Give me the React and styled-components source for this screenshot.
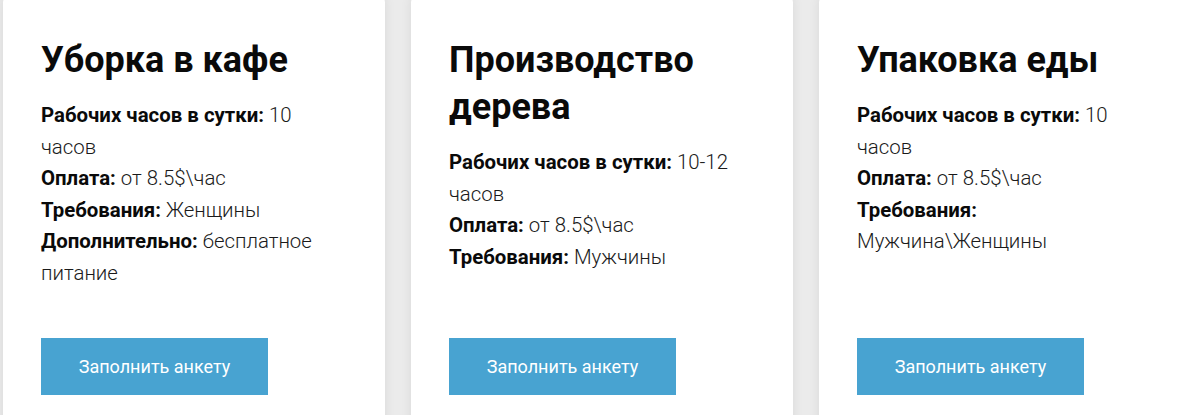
import React from "react";
import styled, { createGlobalStyle } from "styled-components";

const Global = createGlobalStyle`
  html, body {
    margin: 0;
    padding: 0;
    background: #ebebeb;
    overflow: hidden;
  }
  body {
    font-family: Roboto, "Noto Sans", Arial, sans-serif;
    color: #111;
  }
`;

const Row = styled.div`
  display: flex;
  gap: 26px;
  padding-left: 3px;
  margin-top: -7px;
`;

const Card = styled.section`
  flex: 0 0 382px;
  box-sizing: border-box;
  height: 442px;
  background: #fff;
  border-radius: 10px;
  box-shadow: 0 0 12px rgba(0, 0, 0, 0.08);
  padding: 44px 50px 40px 38px;
  display: flex;
  flex-direction: column;
`;

const Title = styled.h2`
  margin: 0 0 16px;
  font-size: 36px;
  line-height: 47px;
  font-weight: 700;
  color: #0a0a0a;
`;

const Info = styled.div`
  font-size: 20.4px;
  line-height: 31.5px;
`;

const Line = styled.p`
  margin: 0;
  font-weight: 300;
  color: #1a1a1a;
`;

const Label = styled.b`
  font-weight: 700;
  color: #0a0a0a;
`;

const Button = styled.button`
  margin-top: auto;
  width: 227px;
  height: 57px;
  border: 0;
  background: #48a3d1;
  color: #fff;
  font-family: Roboto, Arial, sans-serif;
  font-size: 18px;
  font-weight: 400;
  cursor: pointer;
  padding: 0;
`;

const jobs = [
  {
    title: "Уборка в кафе",
    rows: [
      ["Рабочих часов в сутки:", "10 часов"],
      ["Оплата:", "от 8.5$\\час"],
      ["Требования:", "Женщины"],
      ["Дополнительно:", "бесплатное питание"],
    ],
  },
  {
    title: "Производство дерева",
    rows: [
      ["Рабочих часов в сутки:", "10-12 часов"],
      ["Оплата:", "от 8.5$\\час"],
      ["Требования:", "Мужчины"],
    ],
  },
  {
    title: "Упаковка еды",
    rows: [
      ["Рабочих часов в сутки:", "10 часов"],
      ["Оплата:", "от 8.5$\\час"],
      ["Требования:", "Мужчина\\Женщины"],
    ],
  },
];

export default function App() {
  return (
    <>
      <Global />
      <Row>
        {jobs.map((job) => (
          <Card key={job.title}>
            <Title>{job.title}</Title>
            <Info>
              {job.rows.map(([label, value]) => (
                <Line key={label}>
                  <Label>{label}</Label> {value}
                </Line>
              ))}
            </Info>
            <Button>Заполнить анкету</Button>
          </Card>
        ))}
      </Row>
    </>
  );
}
